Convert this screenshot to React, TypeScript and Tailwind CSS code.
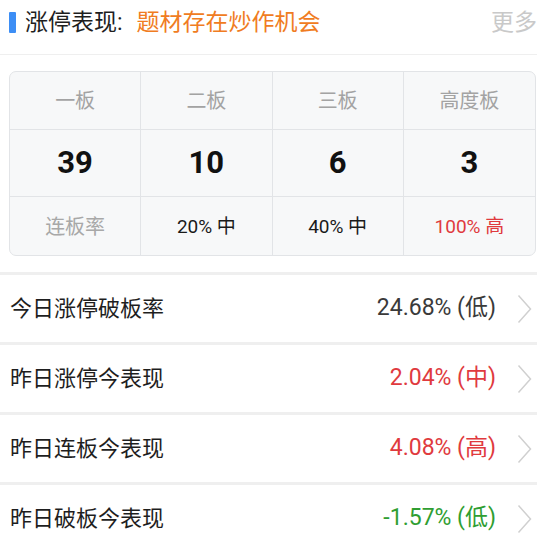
import React from 'react';

const font = { fontFamily: '"Roboto", "Noto Sans CJK SC", sans-serif' };

const cols = [
  { title: '一板', value: '39', rate: '连板率', rateClass: 'text-[#a8a8a8]' },
  { title: '二板', value: '10', rate: '20% 中', rateClass: 'text-[#1a1a1a]' },
  { title: '三板', value: '6', rate: '40% 中', rateClass: 'text-[#1a1a1a]' },
  { title: '高度板', value: '3', rate: '100% 高', rateClass: 'text-[#e03a3e]' },
];

const rows = [
  { label: '今日涨停破板率', value: '24.68% (低)', color: 'text-[#3a3a3a]' },
  { label: '昨日涨停今表现', value: '2.04% (中)', color: 'text-[#e03a3e]' },
  { label: '昨日连板今表现', value: '4.08% (高)', color: 'text-[#e03a3e]' },
  { label: '昨日破板今表现', value: '-1.57% (低)', color: 'text-[#2f9e32]' },
];

const Chevron = () => (
  <svg width="15" height="30" viewBox="0 0 15 30" fill="none" className="shrink-0">
    <path d="M1.5 1.5 L13.5 15 L1.5 28.5" stroke="#d0d0d0" strokeWidth="1.5" />
  </svg>
);

export default function App() {
  return (
    <div className="w-[537px] h-[551px] bg-white overflow-hidden" style={font}>
      {/* Header */}
      <div className="h-[55px] pb-[10px] flex items-center border-b border-[#efefef]">
        <div className="ml-[9px] w-[7px] h-[21px] bg-[#3d8ef5] rounded-[1px]" />
        <div className="ml-[9px] text-[23px] leading-none text-[#1e1e1e]">涨停表现:</div>
        <div className="ml-[14px] text-[23px] leading-none text-[#f07c22]">题材存在炒作机会</div>
        <div className="ml-auto text-[23px] leading-none text-[#c9c9c9] whitespace-nowrap">更多</div>
      </div>

      {/* Board table */}
      <div className="mt-[16px] ml-[9px] w-[527px] h-[185px] grid grid-cols-4 grid-rows-[58px_67px_58px] bg-[#f7f8f9] border border-[#e2e4e7] rounded-[7px] overflow-hidden">
        {cols.map((c, i) => (
          <div key={'t' + i} className={`flex items-center justify-center text-[20px] text-[#a3a3a3] border-b border-[#e2e4e7] ${i < 3 ? 'border-r' : ''}`}>
            {c.title}
          </div>
        ))}
        {cols.map((c, i) => (
          <div key={'v' + i} className={`flex items-center justify-center text-[31px] font-bold text-[#111] border-b border-[#e2e4e7] ${i < 3 ? 'border-r' : ''}`}>
            {c.value}
          </div>
        ))}
        {cols.map((c, i) => (
          <div key={'r' + i} className={`flex items-center justify-center pt-[2px] ${i === 0 ? 'text-[20px]' : 'text-[19px]'} ${c.rateClass} border-[#e2e4e7] ${i < 3 ? 'border-r' : ''}`}>
            {c.rate}
          </div>
        ))}
      </div>

      {/* Stats list */}
      <div className="mt-[16px]">
        {rows.map((r) => (
          <div key={r.label} className="h-[70px] flex items-center border-t-[3px] border-[#efefef] pl-[10px] pr-[5px]">
            <div className="text-[22px] text-[#1e1e1e]">{r.label}</div>
            <div className={`ml-auto text-[23px] ${r.color}`}>{r.value}</div>
            <div className="ml-[21px]">
              <Chevron />
            </div>
          </div>
        ))}
      </div>
    </div>
  );
}
